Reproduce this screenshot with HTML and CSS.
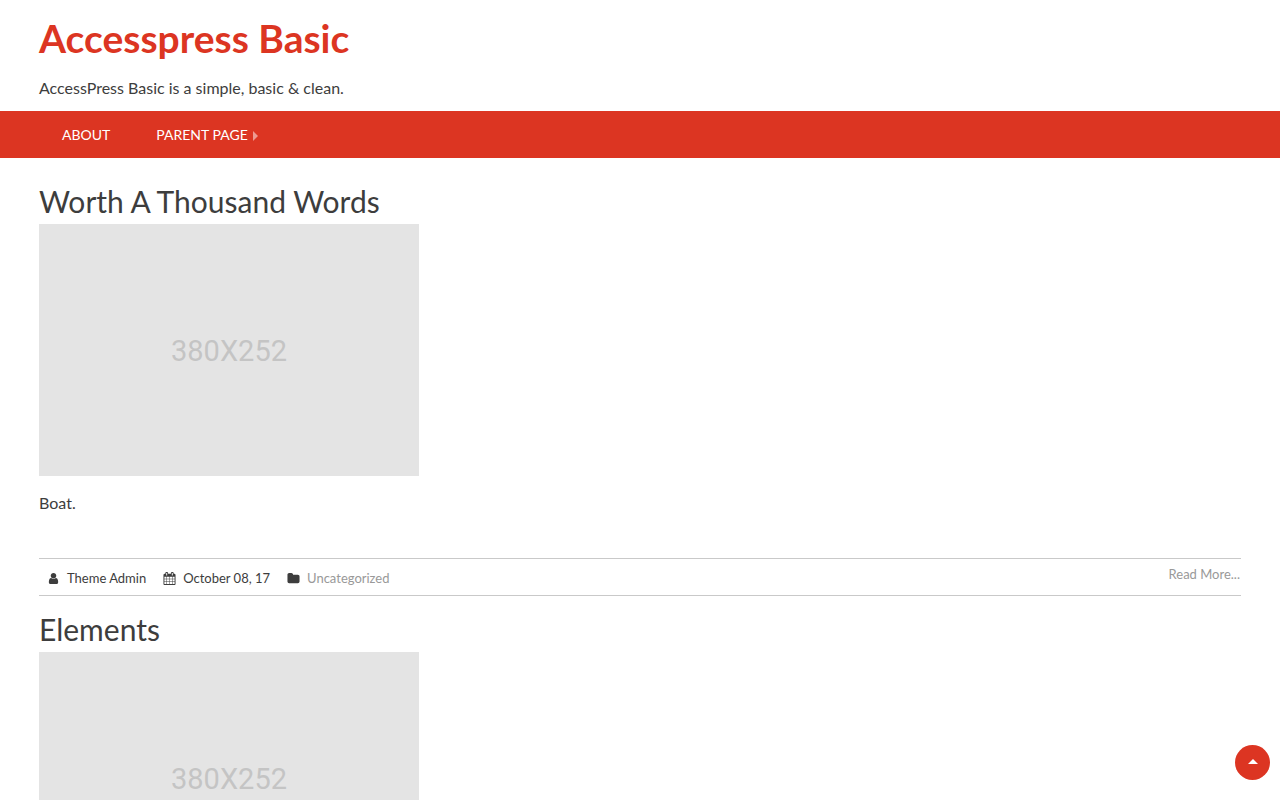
FILE: index.html
```html
<!DOCTYPE html>
<html lang="en">
<head>
<meta charset="utf-8">
<meta name="viewport" content="width=device-width, initial-scale=1">
<title>Accesspress Basic</title>
<link rel="stylesheet" href="styles.css">
</head>
<body>
<header class="site-header">
  <h1 class="site-title"><a href="#">Accesspress Basic</a></h1>
  <p class="site-description">AccessPress Basic is a simple, basic &amp; clean.</p>
</header>
<nav class="main-nav" aria-label="Main">
  <a href="#">ABOUT</a>
  <a href="#">PARENT PAGE<svg class="nav-arrow" viewBox="0 0 5 10" aria-hidden="true"><path d="M0 0L5 5L0 10Z"/></svg></a>
</nav>
<main class="content">
  <article class="post">
    <h2 class="post-title"><a href="#">Worth A Thousand Words</a></h2>
    <div class="thumbnail">380X252</div>
    <p class="excerpt">Boat.</p>
    <footer class="post-meta">
      <span class="meta-item">
        <svg class="icon" viewBox="0 0 1792 1792" aria-hidden="true"><path d="M1536 1399q0 109-62.500 187t-150.500 78h-854q-88 0-150.500-78t-62.500-187q0-85 8.500-160.500t31.500-152 58.500-131 94-89 134.500-34.500q131 128 313 128t313-128q76 0 134.500 34.500t94 89 58.500 131 31.500 152 8.500 160.500zm-256-887q0 159-112.500 271.500t-271.500 112.500-271.500-112.500-112.500-271.500 112.500-271.500 271.500-112.500 271.500 112.500 112.500 271.500z"/></svg>
        <span>Theme Admin</span>
      </span>
      <span class="meta-item">
        <svg class="icon" viewBox="0 0 1792 1792" aria-hidden="true"><path d="M192 1664h288v-288h-288v288zm352 0h320v-288h-320v288zm-352-352h288v-320h-288v320zm352 0h320v-320h-320v320zm-352-384h288v-288h-288v288zm736 736h320v-288h-320v288zm-384-736h320v-288h-320v288zm768 736h288v-288h-288v288zm-384-352h320v-320h-320v320zm-352-864v-288q0-13-9.500-22.500t-22.500-9.500h-64q-13 0-22.500 9.500t-9.500 22.500v288q0 13 9.500 22.500t22.500 9.500h64q13 0 22.500-9.500t9.500-22.500zm736 864h288v-320h-288v320zm-384-384h320v-288h-320v288zm384 0h288v-288h-288v288zm32-480v-288q0-13-9.500-22.500t-22.500-9.500h-64q-13 0-22.500 9.500t-9.500 22.500v288q0 13 9.500 22.500t22.500 9.500h64q13 0 22.500-9.500t9.500-22.500zm384-64v1280q0 52-38 90t-90 38h-1408q-52 0-90-38t-38-90v-1280q0-52 38-90t90-38h128v-96q0-66 47-113t113-47h64q66 0 113 47t47 113v96h384v-96q0-66 47-113t113-47h64q66 0 113 47t47 113v96h128q52 0 90 38t38 90z"/></svg>
        <span>October 08, 17</span>
      </span>
      <span class="meta-item">
        <svg class="icon" viewBox="0 0 1792 1792" aria-hidden="true"><path d="M1728 608v704q0 92-66 158t-158 66h-1216q-92 0-158-66t-66-158v-960q0-92 66-158t158-66h320q92 0 158 66t66 158v32h672q92 0 158 66t66 158z"/></svg>
        <a href="#">Uncategorized</a>
      </span>
      <a class="read-more" href="#">Read More...</a>
    </footer>
  </article>
  <article class="post">
    <h2 class="post-title"><a href="#">Elements</a></h2>
    <div class="thumbnail">380X252</div>
  </article>
</main>
<button class="to-top" type="button" aria-label="Back to top"><svg viewBox="0 0 10 5" aria-hidden="true"><path d="M5 0L10 5H0Z"/></svg></button>
</body>
</html>
```

FILE: styles.css
```css
* {
  box-sizing: border-box;
}

body {
  margin: 0;
  background: #fff;
  color: #3d3d3d;
  font: 16px/24px Lato, sans-serif;
}

a {
  color: inherit;
  text-decoration: none;
}

.site-header {
  padding: 14px 39px 11px;
}

.site-title {
  margin: 0 0 14px;
  color: #dc3522;
  font-size: 39px;
  line-height: 48px;
}

.site-description {
  margin: 0;
}

.main-nav {
  display: flex;
  padding: 0 39px;
  background: #dc3522;
  color: #fff;
  font-size: 14px;
  line-height: 47px;
}

.main-nav a {
  display: flex;
  align-items: center;
  padding: 0 23px;
}

.nav-arrow {
  width: 5px;
  height: 10px;
  margin: 2px 0 0 5px;
  fill: #fff;
  opacity: 0.5;
}

.content {
  padding: 25px 39px 0;
}

.post {
  margin-bottom: 15px;
}

.post-title {
  margin: 0 0 5px;
  font-size: 30px;
  font-weight: 400;
  line-height: 36px;
}

.thumbnail {
  display: flex;
  align-items: center;
  justify-content: center;
  max-width: 380px;
  aspect-ratio: 380 / 252;
  padding-top: 2px;
  background: #e4e4e4;
  color: #c4c4c4;
  font-family: Roboto, sans-serif;
  font-size: 29px;
}

.excerpt {
  margin: 15px 0 43px;
}

.post-meta {
  display: flex;
  align-items: flex-start;
  gap: 17px;
  padding: 4px 1px 6px 8px;
  border: solid #c9c9c9;
  border-width: 1px 0;
  font-size: 13px;
  line-height: 22px;
}

.meta-item {
  display: flex;
  align-items: center;
  gap: 7px;
  padding-top: 4px;
}

.icon {
  width: 13px;
  height: 13px;
  fill: #3d3d3d;
}

.post-meta a {
  color: #999;
}

.read-more {
  margin-left: auto;
}

.to-top {
  position: fixed;
  right: 10px;
  bottom: 20px;
  display: flex;
  align-items: center;
  justify-content: center;
  width: 35px;
  height: 35px;
  padding: 0 0 2px;
  border: 0;
  border-radius: 50%;
  background: #dc3522;
  cursor: pointer;
}

.to-top svg {
  width: 10px;
  height: 5px;
  fill: #fff;
}
```
